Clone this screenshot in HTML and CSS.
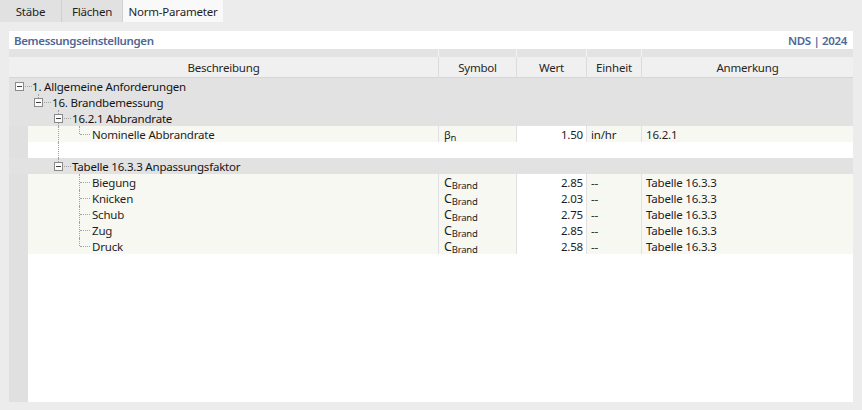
FILE: index.html
```html
<html>
<head>
    <title>Norm-Parameter</title>
    <meta charset="utf-8">
    <link rel="stylesheet" href="styles.css">
</head>
<body>

    <div class="tabs">
        <div class="tab tab-staebe">Stäbe</div>
        <div class="tab tab-flaechen">Flächen</div>
        <div class="tab active">Norm-Parameter</div>
    </div>

    <div class="panel">
        <div class="panelTitle">
            <span>Bemessungseinstellungen</span>
            <span>NDS | 2024</span>
        </div>

        <!-- column header: thin band + captions -->
        <div class="cols band">
            <div></div><div></div><div></div><div></div><div></div>
        </div>
        <div class="cols head">
            <div>Beschreibung</div>
            <div>Symbol</div>
            <div>Wert</div>
            <div>Einheit</div>
            <div>Anmerkung</div>
        </div>

        <div class="rows">
            <div class="row group">
                <span class="g root"><i class="box"></i></span>
                <span class="label">1. Allgemeine Anforderungen</span>
            </div>
            <div class="row group">
                <span class="g root"></span>
                <span class="g"><i class="box up"></i></span>
                <span class="label">16. Brandbemessung</span>
            </div>
            <div class="row group">
                <span class="g root"></span>
                <span class="g"></span>
                <span class="g"><i class="box up down"></i></span>
                <span class="label">16.2.1 Abbrandrate</span>
            </div>

            <div class="cols data">
                <div class="tree">
                    <span class="g root"></span>
                    <span class="g"></span>
                    <span class="g line"></span>
                    <span class="g elbow"></span>
                    <span class="label">Nominelle Abbrandrate</span>
                </div>
                <div class="sym"><span class="b">β</span><span class="idx">n</span></div>
                <div class="val">1.50</div>
                <div class="unit">in/hr</div>
                <div class="note">16.2.1</div>
            </div>

            <div class="row empty">
                <span class="g root"></span>
                <span class="g"></span>
                <span class="g line"></span>
            </div>

            <div class="row group">
                <span class="g root"></span>
                <span class="g"></span>
                <span class="g"><i class="box up"></i></span>
                <span class="label">Tabelle 16.3.3 Anpassungsfaktor</span>
            </div>

            <div class="cols data">
                <div class="tree">
                    <span class="g root"></span><span class="g"></span><span class="g"></span>
                    <span class="g elbow tee"></span>
                    <span class="label">Biegung</span>
                </div>
                <div class="sym"><span class="c">C</span><span class="idx">Brand</span></div>
                <div class="val">2.85</div>
                <div class="unit">--</div>
                <div class="note">Tabelle 16.3.3</div>
            </div>
            <div class="cols data">
                <div class="tree">
                    <span class="g root"></span><span class="g"></span><span class="g"></span>
                    <span class="g elbow tee"></span>
                    <span class="label">Knicken</span>
                </div>
                <div class="sym"><span class="c">C</span><span class="idx">Brand</span></div>
                <div class="val">2.03</div>
                <div class="unit">--</div>
                <div class="note">Tabelle 16.3.3</div>
            </div>
            <div class="cols data">
                <div class="tree">
                    <span class="g root"></span><span class="g"></span><span class="g"></span>
                    <span class="g elbow tee"></span>
                    <span class="label">Schub</span>
                </div>
                <div class="sym"><span class="c">C</span><span class="idx">Brand</span></div>
                <div class="val">2.75</div>
                <div class="unit">--</div>
                <div class="note">Tabelle 16.3.3</div>
            </div>
            <div class="cols data">
                <div class="tree">
                    <span class="g root"></span><span class="g"></span><span class="g"></span>
                    <span class="g elbow tee"></span>
                    <span class="label">Zug</span>
                </div>
                <div class="sym"><span class="c">C</span><span class="idx">Brand</span></div>
                <div class="val">2.85</div>
                <div class="unit">--</div>
                <div class="note">Tabelle 16.3.3</div>
            </div>
            <div class="cols data">
                <div class="tree">
                    <span class="g root"></span><span class="g"></span><span class="g"></span>
                    <span class="g elbow"></span>
                    <span class="label">Druck</span>
                </div>
                <div class="sym"><span class="c">C</span><span class="idx">Brand</span></div>
                <div class="val">2.58</div>
                <div class="unit">--</div>
                <div class="note">Tabelle 16.3.3</div>
            </div>
        </div>
    </div>

</body>
</html>
```

FILE: styles.css
```css
* {
    box-sizing: border-box;
}

body {
    width: 862px;
    height: 410px;
    margin: 0px;
    overflow: hidden;
    background-color: #ececec;
    font-family: "Noto Sans", sans-serif;
    font-size: 11.5px;
    letter-spacing: -0.2px;
    color: #1e1e1e;
}

/* === Tabs === */

.tabs {
    display: flex;
    height: 22px;
}

.tab {
    padding-top: 2px;
    line-height: 20px;
    text-align: center;
    background-color: #e1e1e1;
    border-right: 1px solid #d0d0d0;
}

.tab-staebe {
    width: 62px;
}

.tab-flaechen {
    width: 61px;
}

.tab.active {
    width: 100px;
    background-color: #f9f9f9;
    border-right: none;
}

/* === Panel === */

.panel {
    display: flex;
    flex-direction: column;
    width: 844px;
    height: 371px;
    margin: 9px 0px 0px 9px;
}

.panelTitle {
    display: flex;
    justify-content: space-between;
    height: 18px;
    line-height: 19px;
    padding: 0px 6px 0px 5px;
    background-color: #ffffff;
    color: #4d6796;
    font-weight: 600;
    letter-spacing: -0.35px;
}

.cols {
    display: grid;
    grid-template-columns: 430px 78px 70px 55px 1fr;
}

.cols > div {
    border-right: 1px solid #dcdcdc;
}

.cols > div:last-child {
    border-right: none;
}

.band {
    height: 8px;
    background-color: #e3e3e3;
}

.band > div {
    border-right-color: #f3f3f3;
}

.head {
    height: 21px;
    line-height: 21px;
    background-color: #f0f0f0;
    border-bottom: 1px solid #d6d6d6;
    text-align: center;
    color: #262626;
}

/* === Rows === */

.rows {
    flex: 1;
    display: flex;
    flex-direction: column;
    background: linear-gradient(to right, #e0e0e0 19px, #ffffff 19px);
}

.row {
    display: flex;
    flex: none;
    height: 16px;
}

.group {
    background-color: #e2e2e2;
}

.data {
    flex: none;
    height: 16px;
    grid-auto-rows: 16px;
}

.data > div {
    padding-top: 2px;
    line-height: 14px;
    background-color: #f8f8f3;
    border-right-color: #e1e1e1;
    white-space: nowrap;
}

.data > .tree {
    padding-top: 0px;
}

.tree {
    display: flex;
}

.label {
    padding: 2px 0px 0px 4px;
    line-height: 14px;
    white-space: nowrap;
}

.group .label {
    color: #141414;
}

.sym {
    padding-left: 5px;
}

.sym .b {
    font-size: 11px;
}

.sym .c {
    font-size: 12.5px;
}

.sym .idx {
    font-size: 9.5px;
    line-height: 10px;
    vertical-align: -2px;
}

.data > .val {
    padding-right: 3px;
    text-align: right;
    background-color: #ffffff;
}

.unit,
.note {
    padding-left: 4px;
}

/* === Tree guides === */

.g {
    position: relative;
    flex: none;
    width: 20px;
    height: 16px;
}

.g.root {
    width: 19px;
    background-color: #e0e0e0;
}

.group .g.root {
    background-color: transparent;
}

.g.line::before,
.g.elbow::before {
    content: "";
    position: absolute;
    left: 10px;
    top: 0px;
    height: 16px;
    border-left: 1px dotted #a2a2a2;
}

.g.elbow::before {
    left: 11px;
    height: 8px;
}

.g.tee::before {
    height: 16px;
}

.g.elbow::after {
    content: "";
    position: absolute;
    left: 12px;
    top: 8px;
    width: 10px;
    border-top: 1px dotted #a2a2a2;
}

.box {
    position: absolute;
    left: 6px;
    top: 4px;
    width: 9px;
    height: 9px;
    border: 1px solid #8a8a8a;
    background-color: #fbfbfb;
}

/* minus sign */
.box::before {
    content: "";
    position: absolute;
    left: 1px;
    top: 3px;
    width: 5px;
    border-top: 1px solid #404040;
}

/* connector to the label */
.box::after {
    content: "";
    position: absolute;
    left: 9px;
    top: 3px;
    width: 7px;
    border-top: 1px dotted #a2a2a2;
}

.g:has(.up)::before,
.g:has(.down)::after {
    content: "";
    position: absolute;
    left: 10px;
    border-left: 1px dotted #a2a2a2;
}

.g:has(.up)::before {
    top: 0px;
    height: 4px;
}

.g:has(.down)::after {
    top: 13px;
    height: 3px;
}
```
